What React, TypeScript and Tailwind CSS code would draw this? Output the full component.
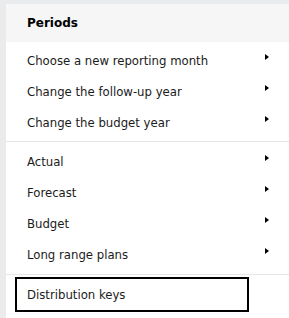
const groups: string[][] = [
  ["Choose a new reporting month", "Change the follow-up year", "Change the budget year"],
  ["Actual", "Forecast", "Budget", "Long range plans"],
];

const Arrow = () => (
  <span className="mb-[7px] block h-0 w-0 border-y-[3px] border-l-[4px] border-y-transparent border-l-black" />
);

const MenuRow = ({ label }: { label: string }) => (
  <div className="flex h-[31px] items-center justify-between pl-[21px] pr-[20px] text-[#1b1b1b]">
    <span>{label}</span>
    <Arrow />
  </div>
);

export default function App() {
  return (
    <div
      className="h-[318px] w-[289px] overflow-hidden bg-[#e9ebec] pl-[6px] pt-[4px] text-[13px]"
      style={{ fontFamily: '"DejaVu Sans Condensed", "DejaVu Sans", Verdana, sans-serif' }}
    >
      <div className="h-full bg-white">
        <div
          className="flex h-[38px] items-center bg-[#f6f6f6] pl-[21px] text-[12px] font-bold text-black"
          style={{ fontFamily: '"DejaVu Sans", Verdana, sans-serif' }}
        >
          Periods
        </div>
        {groups.map((items, i) => (
          <div
            key={i}
            className={i === 0 ? "py-[3px]" : "border-t border-[#e6e6e6] py-[4px]"}
          >
            {items.map((label) => (
              <MenuRow key={label} label={label} />
            ))}
          </div>
        ))}
        <div className="border-t border-[#e6e6e6] pt-[2px]">
          <div className="ml-[9px] flex h-[35px] w-[234px] items-center border-2 border-black pl-[10px] text-[#1b1b1b]">
            Distribution keys
          </div>
        </div>
      </div>
    </div>
  );
}
